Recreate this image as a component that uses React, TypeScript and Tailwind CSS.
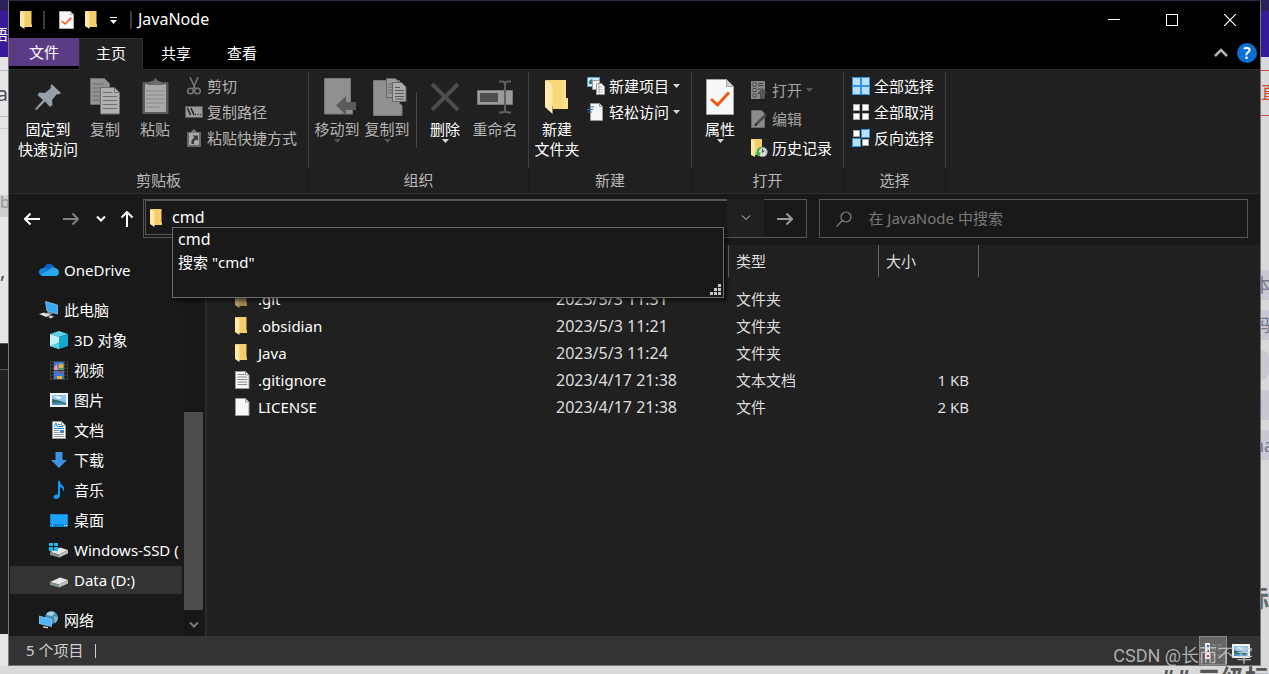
import type { ReactNode } from 'react'

type IconProps = { className?: string }

/* ---------- Icons ---------- */

function FolderIcon({ className = 'h-[18px] w-3' }: IconProps) {
  return (
    <svg viewBox="0 0 12 18" className={`shrink-0 ${className}`} aria-hidden="true">
      <path d="M1 0h10.500v13l.5.5V16H1z" fill="#f5cd6b" />
      <path d="M0 0l4.500 2v16L0 15z" fill="#ffe9a6" />
      <path d="M4 2h1v13H4z" fill="#f9d987" />
    </svg>
  )
}

function BigFolderIcon() {
  return (
    <svg width="24" height="36" viewBox="0 0 24 36" aria-hidden="true">
      <path d="M1 1h20v18.500l2 1.500v9H8z" fill="#f9d87c" />
      <path d="M17 1h4v18h2v11h-6z" fill="#ffe08a" />
      <path d="M0 1l7.500 5v29L0 28z" fill="#ffe9ae" />
    </svg>
  )
}

function CheckDocIcon({ className = 'h-[18px] w-[15px]' }: IconProps) {
  return (
    <svg viewBox="0 0 28 36" className={`shrink-0 ${className}`} preserveAspectRatio="none" aria-hidden="true">
      <path d="M.5.500h20l7 7v28H.500z" fill="#f7f8fa" stroke="#a5a5a5" />
      <path d="M20.500.500v7h7z" fill="#d5d5d5" stroke="#a5a5a5" />
      <path d="M5 20l6.500 6L23 13.500" fill="none" stroke="#f2570f" strokeWidth="3" />
    </svg>
  )
}

function PinIcon() {
  return (
    <svg width="28" height="28" viewBox="0 0 28 28" aria-hidden="true">
      <path d="M17.500 1L27 10l-2.500 1.500-1.500-.5-5 6 .5 5-2.500 2-5-5.500-8.500 8.500L1 26l8-9-5.500-5 2-2.500 5.500.5 6-5-.5-1.500z" fill="#97a0a8" />
    </svg>
  )
}

function CopyIcon() {
  return (
    <svg width="30" height="37" viewBox="0 0 30 37" aria-hidden="true">
      <path d="M.5.500h14l5 5v21H.500z" fill="#929292" stroke="#6d6d6d" />
      <path d="M3 6h11M3 10h13M3 14h8M3 18h8M3 22h8" stroke="#6d6d6d" />
      <path d="M10.500 9.500h14l5 5v21.500h-19z" fill="#b0b0b0" stroke="#6d6d6d" />
      <path d="M24.500 9.500v5h5" fill="none" stroke="#6d6d6d" />
      <path d="M13 14.500h9M13 18.500h14M13 22.500h14M13 26.500h14M13 30.500h14" stroke="#6d6d6d" />
    </svg>
  )
}

function PasteIcon() {
  return (
    <svg width="27" height="37" viewBox="0 0 27 37" aria-hidden="true">
      <rect x=".5" y="4" width="26" height="32" rx="1" fill="#5a5a5a" />
      <path d="M3 6h21v28H3z" fill="#aaaaaa" />
      <path d="M5 7l4-4h2l2.500-3L16 3h2l4 4z" fill="#6a6a6a" />
      <path d="M4 13h18M4 17h18M4 21h18M4 25h18M4 29h14" stroke="#888" />
    </svg>
  )
}

function ScissorsIcon() {
  return (
    <svg width="18" height="18" viewBox="0 0 18 18" fill="none" stroke="#777" aria-hidden="true">
      <path d="M5 0l5.500 12M13 0L8 12" strokeWidth="1.500" />
      <circle cx="5.500" cy="14" r="2.800" strokeWidth="1.500" />
      <circle cx="12.500" cy="14" r="2.800" strokeWidth="1.500" />
    </svg>
  )
}

function CopyPathIcon() {
  return (
    <svg width="18" height="12" viewBox="0 0 18 12" aria-hidden="true">
      <path d="M.5.500h17v11H.500z" fill="#999" stroke="#5c5c5c" />
      <path d="M2.500 2l3 7M6 2l3 7" stroke="#222" strokeWidth="1.500" />
      <path d="M10 8h1v1h-1zM12.500 8h1v1h-1zM15 8h1v1h-1z" fill="#222" />
    </svg>
  )
}

function PasteShortcutIcon() {
  return (
    <svg width="18" height="18" viewBox="0 0 18 18" aria-hidden="true">
      <path d="M2 3h14v15H2z" fill="#666" />
      <path d="M4 4h10v12H4z" fill="#aaa" />
      <path d="M5 4l2-2 2-2 2 2 2 2z" fill="#777" />
      <path d="M7.500 6.500H13V12l-1.500-1.500Q8.500 11 9 15H6.500Q5.500 10.500 9.500 8.500z" fill="#3a3a3a" />
    </svg>
  )
}

function MoveToIcon() {
  return (
    <svg width="38" height="37" viewBox="-6 0 38 37" aria-hidden="true">
      <path d="M.5.500h26v30l2 2v3.500H.500z" fill="#909090" stroke="#777" />
      <path d="M12 27.500L22 18v6h10v8H22v5z" fill="#5b5b5b" />
    </svg>
  )
}

function CopyToIcon() {
  return (
    <svg width="40" height="38" viewBox="-6 0 40 38" aria-hidden="true">
      <path d="M.5 2.500h26v23l2.500 2v10H.500z" fill="#909090" stroke="#777" />
      <path d="M13.500.500h9l4 4v15h-13z" fill="#999" stroke="#666" />
      <path d="M15 6h4M15 9h4M15 12h4M15 15h4" stroke="#666" />
      <path d="M19.500 4.500h9l4.500 4.500v14.500H19.500z" fill="#aaa" stroke="#666" />
      <path d="M22 9.500h5M22 12.500h9M22 15.500h9M22 18.500h9M22 21h9" stroke="#555" />
    </svg>
  )
}

function DeleteIcon() {
  return (
    <svg width="30" height="30" viewBox="0 0 30 30" aria-hidden="true">
      <path d="M2 2l26 26M28 2L2 28" stroke="#4c4c4c" strokeWidth="4" />
    </svg>
  )
}

function RenameIcon() {
  return (
    <svg width="36" height="34" viewBox="0 0 36 34" aria-hidden="true">
      <path d="M.5 10.500h35v14H.500z" fill="#9b9b9b" stroke="#777" />
      <path d="M3 13h18v9H3z" fill="#4e4e4e" />
      <path d="M22 1.500h3q3 0 3 3 0-3 3-3h3M28 4v26M22 32.500h3q3 0 3-3 0 3 3 3h3" fill="none" stroke="#5f5f5f" strokeWidth="2" />
    </svg>
  )
}

function NewItemIcon() {
  return (
    <svg width="18" height="18" viewBox="0 0 18 18" aria-hidden="true">
      <path d="M.5.500h12v9H.500z" fill="#cfeaf7" stroke="#5ba5cb" />
      <path d="M2 4l3-2 2 5H2z" fill="#3d7d78" />
      <path d="M5.500 3.500h7v9h-7z" fill="#f6f6f6" stroke="#999" />
      <path d="M9.500 6.500h5l3 3v8h-8z" fill="#fff" stroke="#999" />
      <path d="M11 10h5M11 12.500h5M11 15h5" stroke="#a9c4e8" />
      <path d="M12 7v10" stroke="#e58f8f" />
    </svg>
  )
}

function EasyAccessIcon() {
  return (
    <svg width="18" height="18" viewBox="0 0 18 18" aria-hidden="true">
      <path d="M3.500.500h9l3 3v14h-12z" fill="#f5f6f8" stroke="#999" />
      <path d="M12.500.500v3h3" fill="none" stroke="#999" />
      <path d="M2 4h5M0 6.500h6M1 9h4" stroke="#2f74b5" />
    </svg>
  )
}

function OpenIcon() {
  return (
    <svg width="18" height="18" viewBox="0 0 18 18" aria-hidden="true">
      <path d="M1 0h14v18H1z" fill="#858585" />
      <path d="M3 2h3v3H3zM3 7.500h3v3H3zM3 13h3v3H3z" fill="#a5a5a5" stroke="#444" />
      <path d="M8 2.500h5M8 4.500h5M8 8h3" stroke="#444" />
      <path d="M12.500 7.500L17 12.500h-2.500V18h-4v-5.500H8z" fill="#5a5a5a" stroke="#333" strokeWidth=".5" />
    </svg>
  )
}

function EditIcon() {
  return (
    <svg width="18" height="18" viewBox="0 0 18 18" aria-hidden="true">
      <path d="M1.500.500h10l3 3v14h-13z" fill="#8c8c8c" stroke="#6b6b6b" />
      <path d="M16 4.500L5.500 15" stroke="#4a4a4a" strokeWidth="2.500" />
      <path d="M5.500 13l2 2-3.500 1.500z" fill="#333" />
    </svg>
  )
}

function HistoryIcon() {
  return (
    <svg width="18" height="18" viewBox="0 0 18 18" aria-hidden="true">
      <path d="M1 0h11v16H1z" fill="#f5cd6b" />
      <path d="M1 0l4 2v16l-4-2z" fill="#ffe9a6" />
      <circle cx="12.500" cy="13" r="4.800" fill="#d8dcdf" stroke="#888" />
      <path d="M12.500 10v3.500l2-2" fill="none" stroke="#444" />
      <path d="M10.500 8Q6 9 7 14l-2 .5 3.500 3 2.500-4H9q-.5-3 2-4z" fill="#2fb83b" />
    </svg>
  )
}

function SelectIcon({ on }: { on: boolean[] }) {
  return (
    <svg width="18" height="18" viewBox="0 0 18 18" aria-hidden="true">
      {on.map((active, i) => {
        const x = (i % 2) * 9
        const y = Math.floor(i / 2) * 9
        return active ? (
          <rect key={i} x={x + 0.5} y={y + 0.5} width="8" height="8" fill="#b9e0fb" stroke="#2f95e3" />
        ) : (
          <rect key={i} x={x + 1.5} y={y + 1.5} width="6" height="6" fill="#fff" stroke="#a8a8a8" />
        )
      })}
    </svg>
  )
}

function TriangleDown({ className = 'fill-[#d8d8d8]' }: IconProps) {
  return (
    <svg width="7" height="4" viewBox="0 0 7 4" className={`shrink-0 ${className}`} aria-hidden="true">
      <path d="M0 0h7L3.500 4z" />
    </svg>
  )
}

function OneDriveIcon() {
  return (
    <svg width="20" height="14" viewBox="0 0 20 14" aria-hidden="true">
      <path d="M5 5Q7 0 11.500 1q3 .6 4 4l-8 7H4Q0 12 0 8.500 0 5.500 5 5z" fill="#0a66c2" />
      <path d="M5 5q2-.5 4 1l6 4-9 3H4Q0 12.500 0 9t5-4z" fill="#1580d8" />
      <path d="M9 8q2-4 6.500-3.500Q20 6 20 9.500q-.3 3.500-3.500 3.500H5q-2 0-3.500-1.500z" fill="#2ba6ee" />
    </svg>
  )
}

function PcIcon() {
  return (
    <svg width="20" height="18" viewBox="0 0 20 18" aria-hidden="true">
      <path d="M6.500.500L18.500 4v9L8 10z" fill="#3aa7f5" stroke="#9ad3fb" strokeWidth=".7" />
      <path d="M9 11l5 1.500-4 1.500-3-1z" fill="#9aa5ad" />
      <path d="M0 13l5-1.500 7 2.500-5 2z" fill="#d8dde1" />
      <path d="M9 16l3-1.500 3 1L12 17.500z" fill="#c5cace" />
    </svg>
  )
}

function CubeIcon() {
  return (
    <svg width="18" height="18" viewBox="0 0 18 18" aria-hidden="true">
      <path d="M0 3l9-3 9 3-9 3z" fill="#5fd3ea" />
      <path d="M0 3l9 3v12l-9-3z" fill="#c6f1f6" />
      <path d="M18 3L9 6v12l9-3z" fill="#13a8cf" />
      <path d="M0 15l9-4v7z" fill="#58d0de" />
    </svg>
  )
}

function VideoIcon() {
  return (
    <svg width="18" height="19" viewBox="0 0 18 19" aria-hidden="true">
      <path d="M0 0h18v19H0z" fill="#3c3c3c" />
      <path d="M2 1v18M16 1v18" stroke="#141414" strokeWidth="2" strokeDasharray="2 1.500" />
      <path d="M4 1h10v8H4zM4 10h10v8H4z" fill="#3b78d8" />
      <path d="M4 6l3-3 1 6H4z" fill="#e88ad0" />
      <circle cx="11" cy="5" r="2.500" fill="#e3b52c" />
      <path d="M8 7h5v2H8z" fill="#4a9c3f" />
      <path d="M9 10h3v2H9z" fill="#d5382c" />
      <path d="M7 15h5v3H7z" fill="#e3b52c" />
    </svg>
  )
}

function PictureIcon() {
  return (
    <svg width="18" height="14" viewBox="0 0 18 14" aria-hidden="true">
      <path d="M0 0h18v14H0z" fill="#f2f2f2" />
      <path d="M2 2h14v10H2z" fill="#8cc4ef" />
      <path d="M4 4q4-2 8 1l-3 1z" fill="#fff" />
      <path d="M2 6q6 1 14 4v2H2z" fill="#356f6b" />
      <path d="M2 10q8-1 14 1v1H2z" fill="#4d8fc4" />
    </svg>
  )
}

function DocumentIcon() {
  return (
    <svg width="18" height="18" viewBox="0 0 18 18" aria-hidden="true">
      <path d="M2.500.500h9l4 4v13h-13z" fill="#f7f8fa" stroke="#999" />
      <path d="M11.500.500v4h4" fill="none" stroke="#999" />
      <path d="M4 6l2-4 1.500 4M8 3.500h2.500M8 5.500h5M4 7.500h10" stroke="#2088d8" fill="none" />
      <path d="M10 9h4v3h-4z" fill="#3d86b8" />
      <path d="M4 9.500h5M4 11.500h5M4 13.500h10M4 15.500h10" stroke="#999" />
    </svg>
  )
}

function DownloadIcon() {
  return (
    <svg width="18" height="18" viewBox="0 0 18 18" aria-hidden="true">
      <path d="M5.500 1h7v8H17l-8 8-8-8h4.500z" fill="#3d94e3" />
    </svg>
  )
}

function MusicIcon() {
  return (
    <svg width="18" height="18" viewBox="0 0 18 18" aria-hidden="true">
      <path d="M8 0h2q0 3 3 5 2 2 .5 6 0-4-3.500-5v8.500q-.5 3-3.500 3.500-3 .2-3-2 .5-3 4.500-2.500z" fill="#0d9cf2" />
    </svg>
  )
}

function DesktopIcon() {
  return (
    <svg width="18" height="13" viewBox="0 0 18 13" aria-hidden="true">
      <path d="M0 0h18v13H0z" fill="#0b84dc" />
      <path d="M1 1h16v9H1z" fill="#1ea4fb" />
      <path d="M2 11h1v1H2zM14 11h1v1h-1zM16 11h1v1h-1z" fill="#fff" />
    </svg>
  )
}

function DriveIcon({ system = false }: { system?: boolean }) {
  return (
    <svg width="20" height="16" viewBox="0 0 20 16" aria-hidden="true">
      <path d="M1 10l10-4.500 8 2.500-9 4.500z" fill="#e6e6e6" />
      <path d="M1 10l9 2.500V15.500L1 13z" fill="#8d8d8d" />
      <path d="M10 12.500L19 8v3.500l-9 4z" fill="#bdbdbd" />
      <path d="M6.500 12.500l2 .5v1l-2-.5z" fill="#22c933" />
      {system && <path d="M0 1h4v3H0zM5 1h4v3H5zM0 5h4v4H0zM5 5h4v4H5z" fill="#19b9ef" />}
    </svg>
  )
}

function NetworkIcon() {
  return (
    <svg width="20" height="18" viewBox="0 0 20 18" aria-hidden="true">
      <circle cx="12.500" cy="6.500" r="6.500" fill="#3f8fb5" />
      <path d="M8 2q4-3 8 0l-3 3-5-1z" fill="#a8d3e2" />
      <path d="M15 5l4 1q0 4-3 6z" fill="#81b9cc" />
      <path d="M0 5l12.500 3.500v7L0 12.500z" fill="#4fb4f7" stroke="#a4d8f8" strokeWidth=".7" />
      <path d="M4 15l5 1v1.500L4 16.500z" fill="#ccd2d6" />
    </svg>
  )
}

function FileIcon({ lines = false }: { lines?: boolean }) {
  return (
    <svg width="15" height="18" viewBox="0 0 15 18" className="shrink-0" aria-hidden="true">
      <path d="M.5.500h10l3.500 3.500v13.500H.500z" fill="#f7f7f8" stroke="#9a9a9a" />
      <path d="M10.500.500v3.500H14" fill="none" stroke="#9a9a9a" />
      {lines && <path d="M2.500 3.500h7M2.500 6h9.500M2.500 8.500h9.500M2.500 11h9.500M2.500 13.500h9.500" stroke="#888" />}
    </svg>
  )
}

function ArrowIcon({ className = '' }: IconProps) {
  return (
    <svg width="16" height="14" viewBox="0 0 16 14" fill="none" stroke="currentColor" strokeWidth="2" className={className} aria-hidden="true">
      <path d="M0 7h15M9.500 1.500L15 7l-5.500 5.500" />
    </svg>
  )
}

function ChevronIcon({ className = '' }: IconProps) {
  return (
    <svg width="10" height="6" viewBox="0 0 10 6" fill="none" stroke="currentColor" className={className} aria-hidden="true">
      <path d="M1 .5l4 4 4-4" />
    </svg>
  )
}

/* ---------- Ribbon ---------- */

function RibbonGroup({ title, className, children }: { title: string; className: string; children: ReactNode }) {
  return (
    <section aria-label={title} className={`flex shrink-0 flex-col ${className}`}>
      <div className="flex h-24 border-r border-[#404040]">{children}</div>
      <h2 className="border-r border-[#191919] pb-px text-center leading-6 text-[#b8b8b8]">{title}</h2>
    </section>
  )
}

type BigButtonProps = {
  icon: ReactNode
  lines: string[]
  className?: string
  muted?: boolean
  arrow?: string
}

function BigButton({ icon, lines, className = 'w-[50px]', muted = false, arrow }: BigButtonProps) {
  return (
    <button
      type="button"
      className={`flex shrink-0 flex-col items-center pt-1.5 leading-5 whitespace-nowrap ${muted ? 'text-[#b5b5b5]' : 'text-white'} ${className}`}
    >
      <span className="flex h-[41px] items-center pb-1">{icon}</span>
      {lines.map((line) => (
        <span key={line}>{line}</span>
      ))}
      {arrow && <TriangleDown className={arrow} />}
    </button>
  )
}

type SmallButtonProps = { icon: ReactNode; label: string; className?: string; arrow?: string }

function SmallButton({ icon, label, className = 'h-[26px] text-white', arrow }: SmallButtonProps) {
  return (
    <button type="button" className={`flex items-center gap-1 whitespace-nowrap ${className}`}>
      <span className="flex w-[18px] justify-center">{icon}</span>
      {label}
      {arrow && <TriangleDown className={arrow} />}
    </button>
  )
}

function Ribbon() {
  return (
    <div className="flex overflow-hidden border-y border-[#2e2e2e] bg-[#202020] pt-0.5">
      <RibbonGroup title="剪贴板" className="w-[300px]">
        <BigButton icon={<PinIcon />} lines={['固定到', '快速访问']} className="ml-[9px] w-[60px]" />
        <BigButton icon={<CopyIcon />} lines={['复制']} className="ml-0.5 w-[50px]" muted />
        <BigButton icon={<PasteIcon />} lines={['粘贴']} muted />
        <div className="flex flex-col pt-px pl-[5px]">
          <SmallButton icon={<ScissorsIcon />} label="剪切" className="h-[26px] text-[#b5b5b5]" />
          <SmallButton icon={<CopyPathIcon />} label="复制路径" className="h-[26px] text-[#b5b5b5]" />
          <SmallButton icon={<PasteShortcutIcon />} label="粘贴快捷方式" className="h-[26px] text-[#b5b5b5]" />
        </div>
      </RibbonGroup>

      <RibbonGroup title="组织" className="w-[220px]">
        <BigButton icon={<MoveToIcon />} lines={['移动到']} className="ml-[3px] w-[50px]" muted arrow="fill-[#555]" />
        <BigButton icon={<CopyToIcon />} lines={['复制到']} muted arrow="fill-[#555]" />
        <div className="mt-5 ml-1 h-14 w-px bg-[#4a4a4a]" />
        <BigButton icon={<DeleteIcon />} lines={['删除']} className="ml-[3px] w-[50px]" arrow="fill-[#d8d8d8]" />
        <BigButton icon={<RenameIcon />} lines={['重命名']} muted />
      </RibbonGroup>

      <RibbonGroup title="新建" className="w-[163px]">
        <BigButton icon={<BigFolderIcon />} lines={['新建', '文件夹']} className="w-14" />
        <div className="flex flex-col pt-px pl-0.5">
          <SmallButton icon={<NewItemIcon />} label="新建项目" arrow="fill-[#d8d8d8]" />
          <SmallButton icon={<EasyAccessIcon />} label="轻松访问" arrow="fill-[#d8d8d8]" />
        </div>
      </RibbonGroup>

      <RibbonGroup title="打开" className="w-[152px]">
        <BigButton icon={<CheckDocIcon className="h-9 w-7" />} lines={['属性']} className="w-14" arrow="fill-[#d8d8d8]" />
        <div className="flex flex-col pt-[3px] pl-0.5">
          <SmallButton icon={<OpenIcon />} label="打开" className="h-[29px] text-[#a5a5a5]" arrow="fill-[#555]" />
          <SmallButton icon={<EditIcon />} label="编辑" className="h-[29px] text-[#a5a5a5]" />
          <SmallButton icon={<HistoryIcon />} label="历史记录" className="h-[29px] text-white" />
        </div>
      </RibbonGroup>

      <RibbonGroup title="选择" className="w-[102px]">
        <div className="flex flex-col pt-px pl-2">
          <SmallButton icon={<SelectIcon on={[true, true, true, true]} />} label="全部选择" />
          <SmallButton icon={<SelectIcon on={[false, false, false, false]} />} label="全部取消" />
          <SmallButton icon={<SelectIcon on={[false, true, true, false]} />} label="反向选择" />
        </div>
      </RibbonGroup>
    </div>
  )
}

/* ---------- Title bar and tabs ---------- */

function TitleBar() {
  return (
    <header className="flex h-[37px] shrink-0 items-center bg-black pl-[11px] text-white">
      <FolderIcon />
      <div className="ml-[11px] h-[18px] w-0.5 bg-[#3c3c3c]" />
      <button type="button" aria-label="属性" className="ml-3.5">
        <CheckDocIcon />
      </button>
      <button type="button" aria-label="新建文件夹" className="ml-[11px]">
        <FolderIcon />
      </button>
      <button type="button" aria-label="自定义快速访问工具栏" className="ml-3 flex w-[9px] flex-col items-center gap-0.5 pt-0.5">
        <span className="h-px w-[7px] bg-white" />
        <TriangleDown className="fill-white" />
      </button>
      <div className="ml-3 h-[18px] w-0.5 bg-[#3c3c3c]" />
      <h1 className="ml-1.5 pb-px text-base leading-6">JavaNode</h1>
      <div className="ml-auto flex h-full pr-px">
        <button type="button" aria-label="最小化" className="flex w-[58px] items-center justify-center">
          <span className="h-px w-3 bg-white" />
        </button>
        <button type="button" aria-label="最大化" className="flex w-[58px] items-center justify-center">
          <span className="h-3 w-3 border border-white" />
        </button>
        <button type="button" aria-label="关闭" className="flex w-[58px] items-center justify-center">
          <svg width="12" height="12" viewBox="0 0 12 12" stroke="#fff" strokeWidth="1.200" aria-hidden="true">
            <path d="M0 0l12 12M12 0L0 12" />
          </svg>
        </button>
      </div>
    </header>
  )
}

function Tabs() {
  return (
    <nav className="flex h-[31px] shrink-0 bg-black text-white">
      <button type="button" className="h-7 w-[70px] bg-[#5b3b84]">文件</button>
      <button type="button" className="relative -mb-px w-16 border border-b-0 border-[#2e2e2e] bg-[#202020] pb-[3px]">主页</button>
      <button type="button" className="w-[66px] pb-0.5">共享</button>
      <button type="button" className="w-[66px] pb-0.5">查看</button>
      <div className="ml-auto flex items-center gap-[9px] pr-[3px] pb-0.5">
        <button type="button" aria-label="最小化功能区">
          <svg width="14" height="9" viewBox="0 0 14 9" fill="none" stroke="#b5b5b5" strokeWidth="2.500" aria-hidden="true">
            <path d="M1 8l6-6 6 6" />
          </svg>
        </button>
        <button
          type="button"
          aria-label="帮助"
          className="flex h-5 w-5 items-center justify-center rounded-full bg-[#0a6fd0] text-base leading-5 font-semibold"
        >
          ?
        </button>
      </div>
    </nav>
  )
}

/* ---------- Address row ---------- */

function AddressRow() {
  return (
    <div className="flex h-[51px] shrink-0 items-start bg-[#191919] pt-[5px] pr-3">
      <button type="button" aria-label="后退" className="flex h-[39px] w-[46px] items-center justify-center text-white">
        <ArrowIcon className="rotate-180" />
      </button>
      <button type="button" aria-label="前进" className="flex h-[39px] w-8 items-center justify-center text-[#808080]">
        <ArrowIcon />
      </button>
      <button type="button" aria-label="最近浏览的位置" className="flex h-[39px] w-7 items-center justify-center text-white">
        <ChevronIcon className="stroke-2" />
      </button>
      <button type="button" aria-label="上移" className="flex h-[39px] w-6 items-center justify-center text-white">
        <ArrowIcon className="-rotate-90" />
      </button>

      <div className="relative ml-1 flex h-[39px] flex-[665_1_0%]">
        <div className="flex min-w-0 flex-1 border-y border-l border-[#555] pb-0.5 pl-px">
          <div className="flex min-w-0 flex-1 items-center border-y border-l border-[#555] pl-1">
            <FolderIcon />
            <input
              type="text"
              aria-label="地址"
              defaultValue="cmd"
              className="ml-2.5 min-w-0 flex-1 bg-transparent pb-0.5 text-base leading-6 text-white outline-none"
            />
          </div>
        </div>
        <button
          type="button"
          aria-label="以前的位置"
          className="flex w-[37px] items-center justify-center border-b border-[#555] bg-[#202020] text-[#d0d0d0]"
        >
          <ChevronIcon />
        </button>
        <button
          type="button"
          aria-label="转到"
          className="flex w-[43px] items-center justify-center border-y border-r border-[#555] text-[#999]"
        >
          <ArrowIcon />
        </button>

        <div className="absolute top-7 right-[83px] left-[29px] z-10 h-[71px] border border-[#6b6b6b] bg-[#191919] pl-[5px] leading-[23px] text-white shadow-[3px_3px_3px_rgba(0,0,0,0.500)]">
          <div className="text-base leading-[23px]">cmd</div>
          <div>搜索 "cmd"</div>
          <svg width="11" height="11" viewBox="0 0 11 11" className="absolute right-0.5 bottom-0.5 fill-[#c8c8c8]" aria-hidden="true">
            <path d="M8 0h3v3H8zM4 4h3v3H4zM8 4h3v3H8zM0 8h3v3H0zM4 8h3v3H4zM8 8h3v3H8z" />
          </svg>
        </div>
      </div>

      <div className="ml-3 flex h-[39px] flex-[427_1_0%] items-center border border-[#555]">
        <svg width="16" height="16" viewBox="0 0 16 16" fill="none" stroke="#808080" strokeWidth="1.200" className="ml-4 shrink-0" aria-hidden="true">
          <circle cx="10" cy="6" r="5" />
          <path d="M6.500 9.500L.5 15.500" />
        </svg>
        <input
          type="text"
          aria-label="搜索"
          placeholder="在 JavaNode 中搜索"
          className="ml-4 min-w-0 flex-1 bg-transparent pb-0.5 text-base leading-6 outline-none placeholder:text-[15px] placeholder:text-[#7a7a7a]"
        />
      </div>
    </div>
  )
}

/* ---------- Navigation pane ---------- */

const PC_ITEMS = [
  { name: '3D 对象', icon: <CubeIcon /> },
  { name: '视频', icon: <VideoIcon /> },
  { name: '图片', icon: <PictureIcon /> },
  { name: '文档', icon: <DocumentIcon /> },
  { name: '下载', icon: <DownloadIcon /> },
  { name: '音乐', icon: <MusicIcon /> },
  { name: '桌面', icon: <DesktopIcon /> },
  { name: 'Windows-SSD (', icon: <DriveIcon system /> },
  { name: 'Data (D:)', icon: <DriveIcon />, selected: true },
]

type NavItemProps = { icon: ReactNode; name: string; nested?: boolean; selected?: boolean }

function NavItem({ icon, name, nested = false, selected = false }: NavItemProps) {
  return (
    <a
      href="#"
      className={`my-px flex h-7 items-center gap-[5px] overflow-hidden whitespace-nowrap ${nested ? 'pl-[39px]' : 'pl-[29px]'} ${selected ? 'bg-[#333]' : ''}`}
    >
      <span className="flex w-5 shrink-0 justify-center">{icon}</span>
      {name}
    </a>
  )
}

function Sidebar() {
  return (
    <aside className="flex w-[198px] shrink-0 border-r-2 border-[#2b2b2b] bg-[#191919] pr-0.5 text-white">
      <div className="flex min-w-0 flex-1 flex-col gap-2.5 overflow-hidden pt-2.5 pr-0.5 pl-px">
        <NavItem icon={<OneDriveIcon />} name="OneDrive" />
        <div className="flex flex-col">
          <NavItem icon={<PcIcon />} name="此电脑" />
          {PC_ITEMS.map((item) => (
            <NavItem key={item.name} {...item} nested />
          ))}
        </div>
        <NavItem icon={<NetworkIcon />} name="网络" />
      </div>
      <div className="flex w-[19px] flex-col bg-[#171717]">
        <div className="flex-[167_1_0%]" />
        <div className="flex-[198_1_0%] bg-[#4d4d4d]" />
        <div className="flex h-[26px] items-center justify-center pt-1 text-[#7a7a7a]">
          <ChevronIcon className="stroke-2" />
        </div>
      </div>
    </aside>
  )
}

/* ---------- File list ---------- */

const FILES = [
  { name: '.git', date: '2023/5/3 11:31', type: '文件夹', size: '', dim: true },
  { name: '.obsidian', date: '2023/5/3 11:21', type: '文件夹', size: '' },
  { name: 'Java', date: '2023/5/3 11:24', type: '文件夹', size: '' },
  { name: '.gitignore', date: '2023/4/17 21:38', type: '文本文档', size: '1 KB' },
  { name: 'LICENSE', date: '2023/4/17 21:38', type: '文件', size: '2 KB' },
]

function FileList() {
  return (
    <main className="min-w-0 flex-1 overflow-hidden bg-[#202020] text-[#dedede]">
      <table className="w-[772px] table-fixed border-separate border-spacing-0 text-left">
        <thead>
          <tr className="h-8">
            <th aria-label="名称" className="w-[341px] border-r border-[#636363]" />
            <th aria-label="修改日期" className="w-[181px] border-r border-[#636363]" />
            <th className="w-[150px] border-r border-[#636363] p-0 pl-[7px] font-normal">类型</th>
            <th className="w-[100px] border-r border-[#636363] p-0 pl-[7px] font-normal">大小</th>
          </tr>
        </thead>
        <tbody className="before:block before:h-2 before:content-['']">
          {FILES.map((file) => (
            <tr key={file.name} className="h-[27px]">
              <td className="p-0 pl-7 text-white">
                <span className="flex items-center gap-2">
                  <span className={`flex w-[15px] ${file.dim ? 'opacity-60' : ''}`}>
                    {file.type === '文件夹' ? <FolderIcon /> : <FileIcon lines={file.type === '文本文档'} />}
                  </span>
                  {file.name}
                </span>
              </td>
              <td className="p-0 pl-2 text-base leading-6">{file.date}</td>
              <td className="p-0 pl-[7px]">{file.type}</td>
              <td className="p-0 pr-2.5 text-right">{file.size}</td>
            </tr>
          ))}
        </tbody>
      </table>
    </main>
  )
}

function StatusBar() {
  return (
    <footer className="flex h-[29px] shrink-0 items-center bg-[#333] pl-[17px] text-[#d0d0d0]">
      <span className="pb-0.5">5 个项目</span>
      <span className="ml-3 h-3.5 w-px bg-[#d0d0d0]" />
      <button
        type="button"
        aria-label="详细信息"
        className="ml-auto flex h-full w-7 items-center justify-center border border-[#8a8a8a] bg-[#666]"
      >
        <svg width="18" height="16" viewBox="0 0 18 16" aria-hidden="true">
          <path d="M1 0h5v16H1z" fill="#eee" />
          <path d="M3 2h2v2H3z" fill="#2b6fb5" />
          <path d="M3 7h2v2H3z" fill="#333" />
          <path d="M3 12h2v2H3z" fill="#c23b2c" />
          <path d="M8 2h4M13 2h5M8 7h4M13 7h5M8 12h4M13 12h5" stroke="#8c8c8c" />
        </svg>
      </button>
      <button type="button" aria-label="大图标" className="mr-2.5 ml-[5px]">
        <PictureIcon />
      </button>
    </footer>
  )
}

/* ---------- Page that shows behind the window ---------- */

function BackdropLeft() {
  return (
    <div className="flex w-2 shrink-0 flex-col overflow-hidden bg-[#e6e6e6] text-[#4a4a55]">
      <div className="h-[11px] bg-[#2b2158]" />
      <div className="flex h-[46px] items-center justify-end bg-[#361a9a] text-white">语</div>
      <div className="h-3.5 border-b border-[#bbb]" />
      <div className="flex h-[46px] items-center justify-end border-b border-[#bbb] text-xl">a</div>
      <div className="h-3 border-b border-[#ccc]" />
      <div className="h-[66px]" />
      <div className="h-[22px] bg-[#cfcfcf] text-base leading-[14px] text-[#999]">b</div>
      <div className="h-[126px] pt-10 text-xl">,</div>
      <div className="h-[27px] border-y border-[#555] bg-[#191919]" />
      <div className="h-[264px] bg-[#212121]" />
    </div>
  )
}

function BackdropRight() {
  return (
    <div className="flex w-2 shrink-0 flex-col overflow-hidden bg-[#d9d9dc] text-lg leading-[30px] whitespace-nowrap text-[#77778c]">
      <div className="h-[11px] bg-[#2b2158]" />
      <div className="h-[46px] bg-[#341b98]" />
      <div className="h-3.5 border-b border-[#c8503a]" />
      <div className="h-[45px] border-b border-[#c8503a] pt-1.5 text-[#d0492d]">直</div>
      <div className="h-[154px]" />
      <div className="h-[30px] bg-[#c8c8d2]">
        <span className="-ml-2">本</span>
      </div>
      <div className="mt-2.5 h-[30px] bg-[#c8c8d2]">
        <span className="-ml-2">码</span>
      </div>
      <div className="mt-2.5 h-[30px] rounded-r-full bg-[#c8c8d2]" />
      <div className="mt-2.5 h-[30px] bg-[#c8c8d2]">
        <span className="-ml-4">用</span>
      </div>
      <div className="mt-2.5 h-[30px] bg-[#c8c8d2]">
        <span className="-ml-2">na</span>
      </div>
      <div className="mt-[122px] text-2xl font-bold text-[#666]">
        <span className="-ml-4">标</span>
      </div>
    </div>
  )
}

export default function App() {
  return (
    <div className="relative flex h-screen min-h-[560px] flex-col overflow-hidden bg-[#dadada] font-['Noto_Sans','Noto_Sans_CJK_SC',sans-serif] text-[15px] leading-5">
      <div className="flex min-h-0 flex-1">
        <BackdropLeft />
        <div className="flex min-w-0 flex-1 flex-col border border-t-[#2e2a4a] border-r-[#777] border-b-[#777] border-l-[#777]">
          <TitleBar />
          <Tabs />
          <Ribbon />
          <AddressRow />
          <div className="flex min-h-0 flex-1">
            <Sidebar />
            <FileList />
          </div>
          <StatusBar />
        </div>
        <BackdropRight />
      </div>
      <div className="flex h-2 shrink-0 items-end justify-end overflow-hidden text-2xl leading-8 font-bold text-[#555]">
        <span className="translate-y-5">## 二级标</span>
      </div>
      <div className="absolute right-4 bottom-1.5 z-20 font-['Roboto','Noto_Sans_CJK_SC',sans-serif] text-lg leading-6 text-[#d0d0d0]/80">
        CSDN @长而不宰
      </div>
    </div>
  )
}
